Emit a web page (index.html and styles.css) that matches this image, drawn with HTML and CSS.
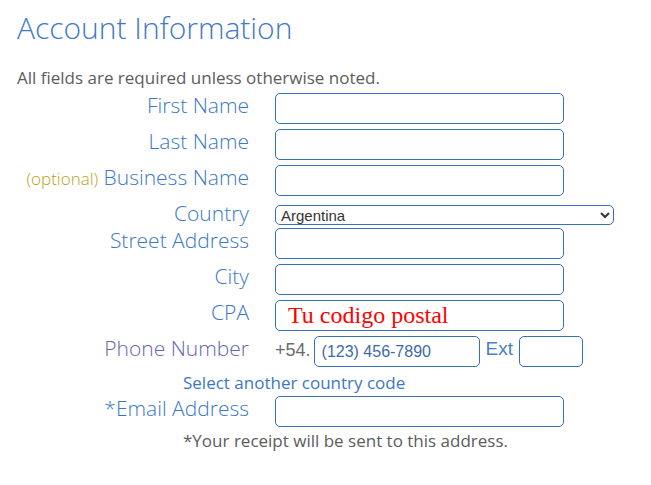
FILE: index.html
```html
<!DOCTYPE html>
<html>
<head>
<meta charset="utf-8">
<link rel="stylesheet" href="styles.css">
</head>
<body>
<div class="page">
  <h1 class="title">Account Information</h1>
  <p class="note">All fields are required unless otherwise noted.</p>
  <div class="form">
    <div class="row">
      <label class="label">First Name</label>
      <input class="field" type="text">
    </div>
    <div class="row">
      <label class="label">Last Name</label>
      <input class="field" type="text">
    </div>
    <div class="row">
      <label class="label"><span class="optional">(optional)</span> Business Name</label>
      <input class="field" type="text">
    </div>
    <div class="row row-country">
      <label class="label">Country</label>
      <select class="select"><option>Argentina</option></select>
    </div>
    <div class="row">
      <label class="label">Street Address</label>
      <input class="field" type="text">
    </div>
    <div class="row">
      <label class="label">City</label>
      <input class="field" type="text">
    </div>
    <div class="row">
      <label class="label">CPA</label>
      <input class="field field-cpa" type="text" placeholder="Tu codigo postal">
    </div>
    <div class="row">
      <label class="label label-phone">Phone Number</label>
      <div class="phone">
        <span class="prefix">+54.</span>
        <input class="field field-phone" type="text" placeholder="(123) 456-7890">
        <span class="ext">Ext</span>
        <input class="field field-ext" type="text">
      </div>
    </div>
    <div class="hint hint-link">Select another country code</div>
    <div class="row">
      <label class="label">*Email Address</label>
      <input class="field" type="text">
    </div>
    <div class="hint hint-receipt">*Your receipt will be sent to this address.</div>
  </div>
</div>
</body>
</html>
```
FILE: styles.css
```css
html, body {
  margin: 0;
  padding: 0;
  background: #ffffff;
}
.page {
  font-family: "Open Sans", "Liberation Sans", sans-serif;
  padding: 0 0 0 17px;
}
.title {
  margin: 0;
  padding-top: 8px;
  font-size: 30px;
  line-height: 40px;
  font-weight: 300;
  color: #3f78c8;
}
.note {
  margin: 19px 0 0 0;
  font-size: 17px;
  line-height: 22px;
  font-weight: 400;
  color: #5c5c5c;
}
.form {
  margin-top: 4px;
  margin-left: -17px;
}
.row {
  display: flex;
  align-items: flex-start;
  margin-bottom: 5px;
}
.label {
  width: 275px;
  padding-right: 26px;
  box-sizing: border-box;
  text-align: right;
  font-size: 21px;
  line-height: 24px;
  font-weight: 300;
  color: #3b78c4;
  white-space: nowrap;
}
.label-phone {
  color: #6466b0;
}
.optional {
  font-size: 17px;
  color: #b9a21c;
}
.field {
  box-sizing: border-box;
  width: 289px;
  height: 31px;
  margin: 0;
  border: 1px solid #3570b8;
  border-radius: 5px;
  background: #fff;
  padding: 0 8px;
  font-family: "Liberation Sans", Arial, sans-serif;
  font-size: 16px;
  outline: none;
}
.row-country {
  margin-bottom: 3px;
}
.select {
  box-sizing: border-box;
  width: 339px;
  height: 20px;
  margin-top: 4px;
  border: 1px solid #3570b8;
  border-radius: 5px;
  background: #fff;
  padding: 0 1px;
  font-family: "Liberation Sans", Arial, sans-serif;
  font-size: 15px;
  color: #333;
}
.field-cpa {
  padding-left: 12px;
  font-family: "Liberation Serif", "Times New Roman", serif;
  font-size: 24px;
}
.field-cpa::placeholder {
  color: #ff0000;
  opacity: 1;
}
.phone {
  display: flex;
  align-items: flex-start;
}
.prefix {
  font-family: "Liberation Sans", Arial, sans-serif;
  font-size: 18px;
  line-height: 28px;
  color: #6b6b6b;
  margin-right: 3px;
}
.field-phone {
  width: 166px;
  padding-left: 7px;
}
.field-phone::placeholder {
  color: #3d6aa6;
  opacity: 1;
}
.ext {
  font-family: "Liberation Sans", Arial, sans-serif;
  font-size: 19px;
  line-height: 26px;
  color: #4a7fc2;
  margin: 0 6px 0 6px;
}
.field-ext {
  width: 64px;
}
.hint {
  margin-left: 183px;
  font-size: 17px;
  line-height: 22px;
  font-weight: 400;
}
.hint-link {
  color: #3b78c4;
  margin-bottom: 2px;
}
.hint-receipt {
  color: #5c5c5c;
  margin-top: -2px;
}
```
